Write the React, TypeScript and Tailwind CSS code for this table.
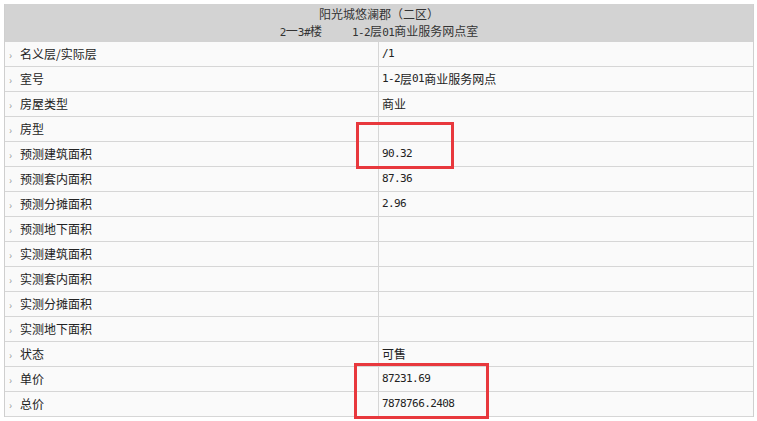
const rows: [string, string][] = [
  ['名义层/实际层', '/1'],
  ['室号', '1-2层01商业服务网点'],
  ['房屋类型', '商业'],
  ['房型', ''],
  ['预测建筑面积', '90.32'],
  ['预测套内面积', '87.36'],
  ['预测分摊面积', '2.96'],
  ['预测地下面积', ''],
  ['实测建筑面积', ''],
  ['实测套内面积', ''],
  ['实测分摊面积', ''],
  ['实测地下面积', ''],
  ['状态', '可售'],
  ['单价', '87231.69'],
  ['总价', '7878766.2408'],
];

const font = { fontFamily: '"SimSun", "Noto Sans CJK SC", "DejaVu Sans", sans-serif' };

// SimSun draws latin glyphs as 6px half-width cells; mimic with a tightened mono
function Txt({ text }: { text: string }) {
  const parts = text.split(/([\x20-\x7e]+)/).filter(Boolean);
  return (
    <>
      {parts.map((p, i) =>
        /^[\x20-\x7e]+$/.test(p) ? (
          <span key={i} className="whitespace-pre text-[11px] tracking-[-0.6px] font-['DejaVu_Sans_Mono',monospace]">{p}</span>
        ) : (
          <span key={i}>{p}</span>
        )
      )}
    </>
  );
}

export default function App() {
  return (
    <div className="relative w-[757px] h-[421px] bg-white text-[12px] text-[#222]" style={font}>
      <div className="pt-[4px] pl-[4px]">
        <div className="w-[750px] border-x border-[#cfcfcf]">
          <div className="h-[38px] bg-[#d3d3d3] flex flex-col items-center justify-center leading-[17px] text-[#333]">
            <div>阳光城悠澜郡（二区）</div>
            <div><Txt text="2一3#楼     1-2层01商业服务网点室" /></div>
          </div>
          {rows.map(([label, value]) => (
            <div key={label} className="flex h-[25px] bg-[#fafafa] border-b border-[#d6d6d6]">
              <div className="w-[374px] flex items-center border-r border-[#d6d6d6]">
                <span className="w-[15px] pl-[4px] text-[10px] text-[#999]">›</span>
                <span>{label}</span>
              </div>
              <div className="flex-1 flex items-center pl-[3px]"><Txt text={value} /></div>
            </div>
          ))}
        </div>
      </div>
      <div className="absolute left-[356px] top-[122px] w-[98px] h-[47px] border-[3px] border-[#e8383d]" />
      <div className="absolute left-[354px] top-[363px] w-[135px] h-[56px] border-[3px] border-[#e8383d]" />
    </div>
  );
}
